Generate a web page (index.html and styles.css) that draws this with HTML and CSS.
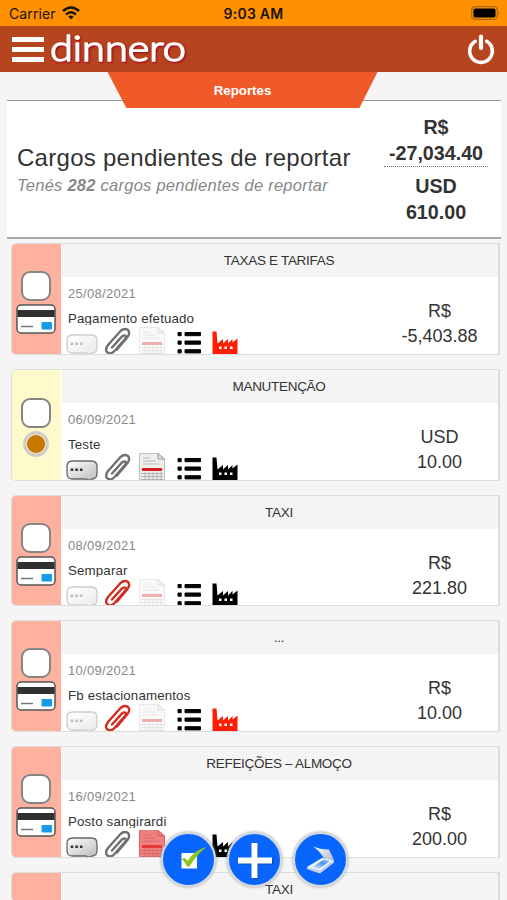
FILE: index.html
```html
<!DOCTYPE html>
<html lang="es">
<head>
<meta charset="utf-8">
<title>dinnero</title>
<link rel="stylesheet" href="styles.css">
</head>
<body>
<svg class="defs" width="0" height="0">
  <defs>
    <linearGradient id="bubble" x1="0" y1="0" x2="1" y2="1"><stop offset="0" stop-color="#fff"/><stop offset="1" stop-color="#bbb"/></linearGradient>
    <linearGradient id="glass" x1="0" y1="1" x2="1" y2="0"><stop offset="0" stop-color="#f2f6ff"/><stop offset=".6" stop-color="#4b95f2"/><stop offset="1" stop-color="#a8c8f8"/></linearGradient>
    <linearGradient id="lid" x1="0" y1="0" x2="1" y2="1"><stop offset="0" stop-color="#fff"/><stop offset="1" stop-color="#b5b9c8"/></linearGradient>
  </defs>
  <symbol id="i-comment" viewBox="0 0 32 28">
    <path d="M6.500 8H25.500Q31 8 31 13.500V20.500Q31 26 26 26Q26 28 20 26H6.500Q1 26 1 20.500V13.500Q1 8 6.500 8Z" fill="url(#bubble)" stroke="#666" stroke-width="1.300"/>
    <path d="M4.700 15.500h2.600v2.600h-2.600zM9.300 15.500h2.600v2.600h-2.600zM13.900 15.500h2.600v2.600h-2.600z" fill="#333"/>
  </symbol>
  <symbol id="i-clip" viewBox="0 0 28 28">
    <path d="M8 20.500 18 9.500Q20.500 7.500 21.500 9Q22.500 10.500 20.500 12.500L10.500 24Q7 27.800 3.500 25.500Q.5 22.500 4 18L16.500 4Q20.500 .5 24 3Q26.500 6 23.500 10L13 22.500" fill="none" stroke="currentColor" stroke-width="2.400" stroke-linecap="round"/>
  </symbol>
  <symbol id="i-doc" viewBox="0 0 26 28">
    <path class="paper" d="M.5 .5H19L25.500 6V28H.5Z"/>
    <path d="M4 5h7M4 8h13M4 11h16" stroke="#bbb" stroke-width="1"/>
    <path d="M2 20.500H24M2 23.500H24M2 26.500H24M6 19v9M10 19v9M14 19v9M18 19v9M22 19v9" stroke="#aaa" stroke-width=".9"/>
    <path d="M19 .5V6H25.500Z" fill="#ddd" stroke="#999" stroke-width=".9"/>
    <path class="stripe" d="M3 15H23V18H3Z"/>
  </symbol>
  <symbol id="i-list" viewBox="0 0 24 24">
    <path d="M1 1.500h3.200v3.200h-3.200zM8 1.500h15.500v3.200h-15.500zM1 10h3.200v3.200h-3.200zM8 10h15.500v3.200h-15.500zM1 18.700h3.200v3.200h-3.200zM8 18.700h15.500v3.200h-15.500z" fill="#050505" stroke="#050505" stroke-linejoin="round" stroke-width="1"/>
  </symbol>
  <symbol id="i-factory" viewBox="0 0 26 25">
    <path d="M.5 25V1.500H4.500L5.500 13.500 11 9V13.500L16 9V13.500L20.500 9V12.500L25.500 8.500V25Z" fill="currentColor"/>
    <path d="M7 16.500h2.500v2.500H7zM12.500 16.500H15v2.500h-2.500zM18 16.500h2.500v2.500H18z" fill="#fff"/>
  </symbol>
  <symbol id="i-card" viewBox="0 0 40 30">
    <rect x="1" y="1" width="38" height="28" rx="4" fill="#fff" stroke="#555" stroke-width="1.500"/>
    <path d="M1.500 6h37v7h-37z" fill="#303030"/>
    <path d="M5 22.500h12" stroke="#777" stroke-width="1.400"/>
    <rect x="25.500" y="18" width="10.500" height="7.500" rx="1" fill="#159be8"/>
  </symbol>
</svg>

<div class="status">
  <div class="carrier"><span>Carrier</span>
    <svg width="18" height="14" viewBox="0 0 18 14" fill="none" stroke="#17120a" stroke-width="2.600"><path d="M1 5Q9-2 17 5M4 8.500Q9 4 14 8.500"/><path d="M6.300 10.500Q9 8.300 11.700 10.500L9 13.500Z" fill="#17120a" stroke="none"/></svg>
  </div>
  <div class="time">9:03 AM</div>
  <svg class="battery" width="30" height="14" viewBox="0 0 30 14"><rect x=".7" y=".7" width="25.500" height="12.600" rx="3.500" fill="none" stroke="#a7680f" stroke-width="1.200"/><rect x="2.500" y="2.500" width="22" height="9" rx="1.800" fill="#000"/><path d="M27.700 5Q29.500 7 27.700 9Z" fill="#a7680f"/></svg>
</div>
<header class="bar">
  <div class="burger"><i></i><i></i><i></i></div>
  <svg class="logo" width="142" height="36" viewBox="0 0 142 36"><text x="0" y="29.500" textLength="136" lengthAdjust="spacingAndGlyphs">dinnero</text></svg>
  <svg class="power" width="28" height="32" viewBox="0 0 28 32" fill="none" stroke="#fff" stroke-linecap="round"><path d="M8.300 8.300A11.300 11.300 0 1 0 19.700 8.300" stroke-width="3.600"/><path d="M14 3.500V15" stroke-width="4.200"/></svg>
</header>
<div class="tab-row"><div class="tab">Reportes</div></div>

<section class="summary">
  <div class="intro"><h1>Cargos pendientes de reportar</h1><p>Tenés <b>282</b> cargos pendientes de reportar</p></div>
  <div class="totals"><div class="total">R$<br>-27,034.40</div><div class="total">USD<br>610.00</div></div>
</section>

<main class="list" id="list"></main>

<nav class="actions">
  <button><svg width="48" height="48" viewBox="0 0 48 48"><path d="M16.500 17H32V32.500H16.500Z" fill="#fff"/><path d="M17 23Q20 20 22.500 25Q29 14 41.500 11Q32 18 24.500 30.500H22Q20 26 17 23Z" fill="#91c520"/></svg></button>
  <button><svg width="48" height="48" viewBox="0 0 48 48"><path d="M21.500 8h6v14.500h15v6h-15V43h-6V28.500h-14v-6h14z" fill="#123a78" opacity=".6"/><path d="M20.500 7h6v14.500H41v6H26.500V42h-6V27.500H7v-6h13.500z" fill="#fff"/></svg></button>
  <button><svg width="48" height="48" viewBox="0 0 48 48"><path d="M10 31 25 22 37 24 23 35Z" fill="#f5f6fb"/><path d="M15 31 27 23.500 33 25 22 33Z" fill="url(#glass)"/><path d="M16 10.500Q25 14 32 13.500L37 24 27 22.500Q23 15 16 10.500Z" fill="url(#lid)"/><path d="M23 35 37 24V26.500L23 37.500 10 33V31Z" fill="#d2d6e2"/></svg></button>
</nav>
<script src="app.js"></script>
</body>
</html>
```
FILE: styles.css
```css
* { box-sizing: border-box; }
body { margin: 0; width: 507px; height: 900px; overflow: hidden; display: flex; flex-direction: column; background: #f5f5f5; font-family: "Liberation Sans", Arial, sans-serif; color: #333; }
.defs { position: absolute; }
.status, .bar, .tab-row, .summary { flex: none; }
.status { height: 26px; background: #ff9000; display: grid; grid-template-columns: 1fr auto 1fr; align-items: center; padding: 2px 6px 0 9px; color: #17120a; font: 14px/24px Inter, sans-serif; }
.carrier { display: flex; align-items: center; gap: 6px; letter-spacing: .1px; }
.carrier svg { margin-top: -2px; }
.time { font-weight: 600; font-size: 14px; letter-spacing: .25px; margin-right: 3px; }
.battery { justify-self: end; margin-top: -2px; margin-right: 0; }
.bar { height: 46px; background: #b5451e; display: flex; align-items: center; padding: 0 12px; }
.burger { width: 32px; display: grid; gap: 5px; }
.burger i { height: 5px; background: #fff; }
.logo { margin-left: 6px; overflow: visible; }
.logo text { font: 300 36px "Lato", sans-serif; fill: #fff; stroke: #fff; stroke-width: 1.600px; stroke-linejoin: round; filter: drop-shadow(1px 1px 1px #a5001c); }
.power { margin-left: auto; }
.tab-row { height: 28px; display: flex; justify-content: center; margin-left: -22px; }
.tab { width: 270px; height: 36px; flex: none; background: #f05a28; clip-path: polygon(0 0, 100% 0, 93.300% 100%, 7% 100%); color: #fff; font-weight: bold; font-size: 13.300px; line-height: 37px; text-align: center; z-index: 1; }
.summary { height: 139px; margin: 0 6px 0 7px; background: #fff; border-top: 1px solid #999; border-bottom: 2px solid #aaa; display: flex; justify-content: space-between; align-items: center; padding: 0 13px 0 10px; }
.intro { padding-top: 4px; }
h1 { margin: 0; font-weight: normal; font-size: 24px; line-height: 28px; letter-spacing: .28px; white-space: nowrap; }
p { margin: 0; color: #888; font-style: italic; font-size: 16.500px; line-height: 26px; letter-spacing: .25px; white-space: nowrap; }
.totals { width: 104px; text-align: center; font-weight: bold; font-size: 19.700px; line-height: 26px; padding-top: 1px; }
.total:first-child { border-bottom: 1px dotted #777; margin-bottom: 6px; white-space: nowrap; }
.list { flex: 1; min-height: 0; overflow: hidden; padding: 4px 7px 0 11px; }
.card { height: 111.800px; margin-bottom: 14px; display: grid; grid-template-columns: 49px 1fr; background: #fff; border: 1px solid #ddd; border-right-width: 2px; border-radius: 5px 0 0 5px; overflow: hidden; }
.card.partial { height: 30px; margin-bottom: 0; border-bottom: 0; }
.side { background: #ffb1a0; display: flex; flex-direction: column; align-items: center; padding-top: 27px; gap: 4px; margin-left: -1px; }
.warn .side { background: #fffacb; padding-top: 28px; }
.box { width: 30px; height: 30px; flex: none; border: 2px solid #858585; border-radius: 9px; background: #fff; }
.dot { width: 26px; height: 26px; margin-top: -1px; border: 2px solid #d0d0cd; border-radius: 50%; background: #c87800; box-shadow: inset 0 0 0 2px #ded9c8; }
.side svg { flex: none; margin-top: -1px; }
.content { display: grid; grid-template-rows: 33px 1fr; min-width: 0; border-left: 1px solid #fff; }
.category { background: #f4f4f4; text-align: center; font-size: 13.500px; line-height: 33px; letter-spacing: -.3px; padding-right: 2px; }
.row { display: grid; grid-template-columns: 1fr 119px; min-width: 0; }
.details { padding: 9px 0 0 5px; min-width: 0; }
.date { padding-left: 1px; color: #888; font-size: 13px; line-height: 16px; letter-spacing: .3px; }
.name { padding-left: 1px; height: 13px; margin-top: 10px; overflow: hidden; font-size: 13.300px; line-height: 14px; letter-spacing: .15px; white-space: nowrap; }
.icons { height: 28px; display: flex; align-items: end; margin: 2px 0 0 -1px; }
.clip { margin-left: 6px; color: #707070; }
.clip.on { color: #d32c20; }
.doc { margin-left: 7px; }
.paper { fill: #eee; stroke: #999; stroke-width: .6; }
.stripe { fill: #d51b1b; }
.doc.red { background: #f04545; clip-path: polygon(0 0, 75% 0, 100% 20%, 100% 100%, 0 100%); }
.doc.red svg { opacity: .35; }
.doc svg { display: block; }
.comment.off { opacity: .32; }
.doc.off { opacity: .35; }
.lines { margin-left: 12px; }
.factory { margin-left: 11px; color: #000; }
.factory.on { color: #ff1d04; }
.amount { text-align: center; font-size: 18px; line-height: 25px; padding: 22px 0 0 2px; }
.actions { position: absolute; left: 161px; top: 832px; display: flex; gap: 11px; }
.actions button { width: 55px; height: 55px; border: 2px solid #d7dbe0; border-radius: 50%; background: #0866ff; padding: 0; display: grid; place-items: center; box-shadow: 0 0 3px #999; }
```
FILE: app.js
```js
const rows = [
  ["TAXAS E TARIFAS", "25/08/2021", "Pagamento efetuado", "R$", "-5,403.88", "off", "", "off", "on"],
  ["MANUTENÇÃO", "06/09/2021", "Teste", "USD", "10.00", "", "", "", "", "warn"],
  ["TAXI", "08/09/2021", "Semparar", "R$", "221.80", "off", "on", "off", ""],
  ["...", "10/09/2021", "Fb estacionamentos", "R$", "10.00", "off", "on", "off", "on"],
  ["REFEIÇÕES – ALMOÇO", "16/09/2021", "Posto sangirardi", "R$", "200.00", "", "", "red", ""]
];
const icon = (id, w, h, cls = "") => `<svg class="${cls}" width="${w}" height="${h}"><use href="#i-${id}"/></svg>`;
const cards = rows.map(([cat, date, name, cur, amt, comment, clip, doc, factory, kind = ""]) => `
<article class="card ${kind}">
  <div class="side"><span class="box"></span>${kind ? '<span class="dot"></span>' : icon("card", 40, 30)}</div>
  <div class="content"><div class="category">${cat}</div>
    <div class="row"><div class="details">
      <div class="date">${date}</div><div class="name">${name}</div>
      <div class="icons">${icon("comment", 32, 28, "comment " + comment)}${icon("clip", 28, 28, "clip " + clip)}<span class="doc ${doc}">${icon("doc", 26, 28)}</span>${icon("list", 24, 24, "lines")}${icon("factory", 26, 25, "factory " + factory)}</div>
    </div><div class="amount">${cur}<br>${amt}</div></div>
  </div>
</article>`);
cards.push('<article class="card partial"><div class="side"></div><div class="content"><div class="category">TAXI</div></div></article>');
document.getElementById("list").innerHTML = cards.join("");
```
